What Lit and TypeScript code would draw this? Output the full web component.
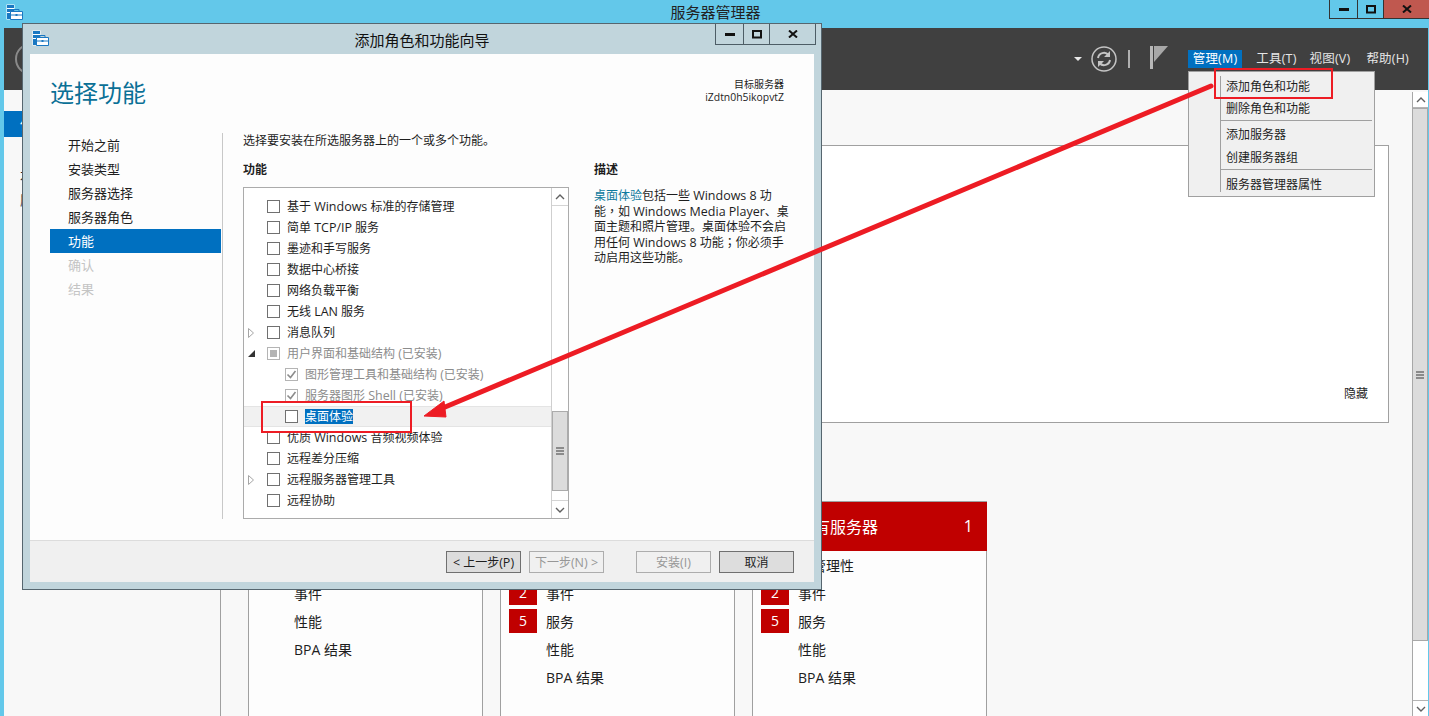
import { LitElement, html, css, svg } from 'lit';
import { customElement } from 'lit/decorators.js';

const FONT = css`"Open Sans", "Noto Sans CJK SC", sans-serif`;

// the original's latin glyphs run a little wider than its CJK ones
const latin = (text: string) =>
  text
    .split(/([\x21-\x7e]+(?: [\x21-\x7e]+)*)/)
    .map((part, i) => (i % 2 ? html`<span class="lat">${part}</span>` : part));

const appIcon = html`
  <svg class="app-icon" width="17" height="16" viewBox="0 0 17 16">
    <rect x="0.5" y="0.5" width="8" height="15" fill="#fff" />
    <rect x="1" y="1" width="7" height="3" fill="#1a78c2" />
    <rect x="1" y="5" width="7" height="3" fill="#1a78c2" />
    <rect x="1" y="9" width="3" height="6" fill="#1a78c2" />
    <path d="M4.5 7.5h12v8h-12z" fill="#fff" stroke="#1a78c2" />
    <path d="M8 7.5v-2h5v2M4.5 11h12" fill="none" stroke="#1a78c2" />
    <rect x="9.5" y="10" width="2" height="2" fill="#1a78c2" />
  </svg>
`;

const chevron = (up: boolean) => html`
  <svg width="10" height="6" viewBox="0 0 10 6">
    <path d=${up ? 'M1 5l4-4 4 4' : 'M1 1l4 4 4-4'} fill="none" stroke="#606060" stroke-width="1.4" />
  </svg>
`;

const grip = html`
  <svg width="8" height="8" viewBox="0 0 8 8">
    <path d="M0 1h8M0 4h8M0 7h8" stroke="#707070" stroke-width="1.4" />
  </svg>
`;

const windowButtons = (closeClass: string) => html`
  <div class="win-buttons">
    <div class="win-btn min"><svg width="10" height="4"><rect width="10" height="3" y="1" fill="#111" /></svg></div>
    <div class="win-btn max"><svg width="10" height="9"><rect x="1" y="1" width="8" height="6.5" fill="none" stroke="#111" stroke-width="2" /></svg></div>
    <div class="win-btn close ${closeClass}">
      <svg width="10" height="8"><path d="M1 0.5l8 7M9 0.5l-8 7" stroke="#111" stroke-width="2" /></svg>
    </div>
  </div>
`;

type Feature = {
  label: string;
  level?: number;
  arrow?: 'open' | 'closed';
  state?: 'partial' | 'checked';
  selected?: boolean;
};

const FEATURES: Feature[] = [
  { label: '基于 Windows 标准的存储管理' },
  { label: '简单 TCP/IP 服务' },
  { label: '墨迹和手写服务' },
  { label: '数据中心桥接' },
  { label: '网络负载平衡' },
  { label: '无线 LAN 服务' },
  { label: '消息队列', arrow: 'closed' },
  { label: '用户界面和基础结构 (已安装)', arrow: 'open', state: 'partial' },
  { label: '图形管理工具和基础结构 (已安装)', level: 1, state: 'checked' },
  { label: '服务器图形 Shell (已安装)', level: 1, state: 'checked' },
  { label: '桌面体验', level: 1, selected: true },
  { label: '优质 Windows 音频视频体验' },
  { label: '远程差分压缩' },
  { label: '远程服务器管理工具', arrow: 'closed' },
  { label: '远程协助' },
];

const STEPS = ['开始之前', '安装类型', '服务器选择', '服务器角色', '功能', '确认', '结果'];

@customElement('roles-wizard')
export class RolesWizard extends LitElement {
  static styles = css`
    :host {
      position: absolute;
      left: 22px;
      top: 23px;
      width: 798px;
      height: 565px;
      display: flex;
      flex-direction: column;
      border: 1px solid #56666f;
      background: #c1d5dc;
      font-family: ${FONT};
      font-size: 12px;
      color: #1e1e1e;
    }
    .lat { font-size: 12.5px; }
    .titlebar {
      height: 30px;
      flex: none;
      display: flex;
      align-items: center;
      justify-content: center;
      position: relative;
      font-size: 15px;
      color: #111;
    }
    .app-icon { position: absolute; left: 9px; top: 6px; }
    .win-buttons {
      position: absolute;
      right: 5px;
      top: 0;
      display: flex;
      height: 20px;
      border: 1px solid #4d5d66;
      border-top: 0;
    }
    .win-btn { display: flex; align-items: center; justify-content: center; }
    .win-btn + .win-btn { border-left: 1px solid #4d5d66; }
    .min { width: 27px; }
    .max { width: 25px; }
    .close { width: 45px; }
    .client {
      flex: 1;
      margin: 0 7px 7px;
      background: #fdfdfd;
      display: flex;
      flex-direction: column;
      min-height: 0;
    }
    .head {
      height: 79px;
      flex: none;
      box-sizing: border-box;
      padding: 24px 30px 0 20px;
      display: flex;
      justify-content: space-between;
    }
    h1 {
      margin: 0;
      font-size: 24px;
      line-height: 30px;
      font-weight: 400;
      color: #0a7096;
    }
    .target { text-align: right; font-size: 10px; line-height: 13px; }
    .target-id { font-size: 10.4px; }
    .body { flex: 1; display: flex; padding-left: 20px; min-height: 0; }
    nav {
      width: 172px;
      height: 386px;
      flex: none;
      border-right: 1px solid #c8c8c8;
      font-size: 13px;
    }
    .step { height: 24px; line-height: 24px; padding-left: 18px; margin-right: 1px; }
    .step.active { background: #0070c0; color: #fff; }
    .step.todo { color: #c4c4c4; }
    .pane { margin-left: 20px; flex: 1; }
    .intro { line-height: 14px; margin-top: 1px; }
    .columns { display: flex; gap: 25px; margin-top: 15px; }
    h2 { margin: 0; font-size: 12px; line-height: 14px; font-weight: 700; }
    .features { width: 326px; flex: none; }
    .list {
      margin-top: 10px;
      height: 330px;
      border: 1px solid #ababab;
      background: #fff;
      display: flex;
    }
    .rows { flex: 1; min-width: 0; padding-top: 8px; overflow: hidden; }
    .row {
      height: 21px;
      box-sizing: border-box;
      display: flex;
      align-items: center;
      padding-left: 2px;
      white-space: nowrap;
    }
    .row > span { margin-bottom: 2px; }
    .row.disabled { color: #8c8c8c; }
    .row.selected { background: #f1f1f1; border-top: 1px solid #e4e4e4; border-bottom: 1px solid #e4e4e4; }
    .expander { width: 21px; flex: none; display: flex; align-items: center; padding-left: 2px; box-sizing: border-box; }
    .indent { width: 18px; flex: none; }
    .box {
      width: 11px;
      height: 11px;
      flex: none;
      margin-right: 7px;
      background: #fff;
      border: 1px solid #707070;
      display: flex;
      align-items: center;
      justify-content: center;
    }
    .disabled .box { border-color: #b4b4b4; }
    .fill { width: 7px; height: 7px; background: #b4b4b4; }
    .row > .hl { background: #0070c0; color: #fff; line-height: 15px; margin-bottom: 0; }
    .vbar {
      width: 17px;
      flex: none;
      box-sizing: border-box;
      border-left: 1px solid #cfcfcf;
      display: flex;
      flex-direction: column;
    }
    .arrow-btn { height: 17px; flex: none; display: flex; align-items: center; justify-content: center; border-bottom: 1px solid #d4d4d4; }
    .arrow-btn.down { border-top: 1px solid #d4d4d4; border-bottom: 0; }
    .track { flex: 1; padding-top: 205px; box-sizing: border-box; display: flex; flex-direction: column; }
    .thumb {
      height: 80px;
      box-sizing: border-box;
      background: #dcdcdc;
      border: 1px solid #ababab;
      display: flex;
      align-items: center;
      justify-content: center;
    }
    .desc { width: 200px; }
    .desc p { margin: 11px 0 0; line-height: 15px; white-space: nowrap; }
    .link { color: #0e7a9e; }
    .mid-punct { font-family: "Noto Sans CJK TC", sans-serif; }
    footer {
      height: 42px;
      flex: none;
      box-sizing: border-box;
      background: #f0f0f0;
      border-top: 1px solid #dcdcdc;
      display: flex;
      padding: 10px 20px 0 416px;
      gap: 8px;
    }
    button {
      width: 75px;
      height: 22px;
      padding: 0 0 1px;
      box-sizing: border-box;
      background: #dddddd;
      border: 1px solid #707070;
      font: inherit;
      color: #1e1e1e;
    }
    button:disabled { background: #f0f0f0; border-color: #adadad; color: #979797; }
    .install { margin-left: 24px; }
  `;

  renderRow(f: Feature) {
    const disabled = f.state ? 'disabled' : '';
    return html`
      <div class="row ${disabled} ${f.selected ? 'selected' : ''}">
        <div class="expander">
          ${f.arrow === 'closed'
            ? html`<svg width="6" height="10"><path d="M0.5 0.5l5 4.5-5 4.5z" fill="#fff" stroke="#a6a6a6" /></svg>`
            : f.arrow === 'open'
              ? html`<svg width="7" height="7"><path d="M7 0v7H0z" fill="#333" /></svg>`
              : ''}
        </div>
        ${f.level ? html`<div class="indent"></div>` : ''}
        <div class="box">
          ${f.state === 'partial' ? html`<div class="fill"></div>` : ''}
          ${f.state === 'checked'
            ? html`<svg width="11" height="11"><path d="M1.5 5.5l3 3 5-6.5" fill="none" stroke="#8c8c8c" stroke-width="1.6" /></svg>`
            : ''}
        </div>
        <span class=${f.selected ? 'hl' : ''}>${latin(f.label)}</span>
      </div>
    `;
  }

  render() {
    return html`
      <div class="titlebar">
        ${appIcon}
        添加角色和功能向导
        ${windowButtons('')}
      </div>
      <div class="client">
        <div class="head">
          <h1>选择功能</h1>
          <div class="target">目标服务器<br /><span class="target-id">iZdtn0h5ikopvtZ</span></div>
        </div>
        <div class="body">
          <nav>
            ${STEPS.map(
              (s, i) => html`<div class="step ${i === 4 ? 'active' : ''} ${i > 4 ? 'todo' : ''}">${s}</div>`,
            )}
          </nav>
          <div class="pane">
            <div class="intro">选择要安装在所选服务器上的一个或多个功能。</div>
            <div class="columns">
              <div class="features">
                <h2>功能</h2>
                <div class="list">
                  <div class="rows">${FEATURES.map((f) => this.renderRow(f))}</div>
                  <div class="vbar">
                    <div class="arrow-btn">${chevron(true)}</div>
                    <div class="track"><div class="thumb">${grip}</div></div>
                    <div class="arrow-btn down">${chevron(false)}</div>
                  </div>
                </div>
              </div>
              <div class="desc">
                <h2>描述</h2>
                <p>
                  <span class="link">桌面体验</span>${latin('包括一些 Windows 8 功')}<br />
                  能<span class="mid-punct">，</span>${latin('如 Windows Media Player')}、桌<br />
                  面主题和照片管理。桌面体验不会启<br />
                  ${latin('用任何 Windows 8 功能')}<span class="mid-punct">；</span>你必须手<br />
                  动启用这些功能。
                </p>
              </div>
            </div>
          </div>
        </div>
        <footer>
          <button>${latin('< 上一步(P)')}</button>
          <button disabled>${latin('下一步(N) >')}</button>
          <button class="install" disabled>${latin('安装(I)')}</button>
          <button>取消</button>
        </footer>
      </div>
    `;
  }
}

type CardRow = { label: string; badge?: number };

const CARDS: { title: string; count: number; rows: CardRow[] }[] = [
  {
    title: '文件和存储服务',
    count: 1,
    rows: [{ label: '可管理性' }, { label: '事件' }, { label: '性能' }, { label: 'BPA 结果' }],
  },
  {
    title: '本地服务器',
    count: 1,
    rows: [
      { label: '可管理性' },
      { label: '事件', badge: 2 },
      { label: '服务', badge: 5 },
      { label: '性能' },
      { label: 'BPA 结果' },
    ],
  },
  {
    title: '所有服务器',
    count: 1,
    rows: [
      { label: '可管理性' },
      { label: '事件', badge: 2 },
      { label: '服务', badge: 5 },
      { label: '性能' },
      { label: 'BPA 结果' },
    ],
  },
];

@customElement('app-root')
export class AppRoot extends LitElement {
  static styles = css`
    :host {
      display: block;
      position: relative;
      width: 1429px;
      height: 716px;
      overflow: hidden;
      background: #63c8ea;
      font-family: ${FONT};
      font-size: 12px;
      color: #1e1e1e;
    }
    .shell { height: 716px; display: flex; flex-direction: column; padding: 0 1px 0 4px; box-sizing: border-box; }
    .titlebar {
      height: 28px;
      flex: none;
      margin: 0 -1px 0 -4px;
      position: relative;
      display: flex;
      justify-content: center;
      padding: 2px 0 0 2px;
      box-sizing: border-box;
      font-size: 15px;
      line-height: 20px;
      color: #222;
    }
    .app-icon { position: absolute; left: 6px; top: 4px; }
    .win-buttons {
      position: absolute;
      right: 0;
      top: 0;
      display: flex;
      height: 18px;
      border: 1px solid #333;
      border-top: 0;
      border-right: 0;
    }
    .win-btn { display: flex; align-items: center; justify-content: center; }
    .win-btn + .win-btn { border-left: 1px solid #333; }
    .min { width: 27px; }
    .max { width: 25px; }
    .close { width: 45px; }
    .close.hot { background: #c0584f; }
    .topbar {
      height: 62px;
      flex: none;
      background: #404040;
      display: flex;
      align-items: center;
      padding-left: 11px;
      position: relative;
    }
    .back { width: 32px; height: 32px; border: 2px solid #8a8a8a; border-radius: 50%; box-sizing: border-box; }
    .tools { margin-left: auto; display: flex; align-items: center; height: 100%; }
    .caret { margin-right: 9px; }
    .divider { width: 2px; height: 18px; background: #b0b0b0; margin: 0 20px 0 11px; }
    .flag { margin-right: 20px; margin-top: -3px; }
    .menubar { display: flex; align-items: center; margin-right: 14px; }
    .menu-item {
      height: 18px;
      line-height: 18px;
      padding: 0 5px;
      color: #e6e6e6;
      font-size: 12.5px;
      letter-spacing: 0.2px;
    }
    .menu-item + .menu-item { margin-left: 3px; }
    .menu-item:last-child { margin-left: 6px; }
    .menu-item.open { background: #0070c0; color: #fff; margin-right: 6px; }
    .content { flex: 1; display: flex; min-height: 0; background: #f8f8f8; }
    .side {
      width: 216px;
      flex: none;
      border-right: 1px solid #a0a0a0;
      padding-top: 21px;
      font-size: 14px;
    }
    .side div { height: 24px; line-height: 24px; padding-left: 16px; }
    .side .on { height: 26px; line-height: 26px; background: #0070c0; color: #fff; margin-bottom: 27px; }
    .side .muted { color: #555; }
    .main { flex: 1; min-width: 0; padding: 55px 23px 0 27px; overflow: hidden; }
    .panel {
      height: 278px;
      box-sizing: border-box;
      background: #fff;
      border: 1px solid #a0a0a0;
      display: flex;
      flex-direction: column;
      justify-content: flex-end;
      align-items: flex-end;
      padding: 0 20px 20px 0;
    }
    .cards { display: flex; gap: 17px; margin-top: 78px; }
    .card { width: 235px; flex: none; height: 300px; box-sizing: border-box; background: #fdfdfd; border: 1px solid #a0a0a0; }
    .card-head {
      height: 49px;
      box-sizing: border-box;
      margin: 0 -1px;
      background: #c00000;
      color: #fff;
      display: flex;
      align-items: center;
      justify-content: space-between;
      padding: 0 14px 2px 46px;
      font-size: 16px;
    }
    .card-rows { padding: 2px 0 0 8px; font-size: 14px; }
    .card-row { height: 24px; margin-bottom: 4px; display: flex; align-items: center; }
    .badge {
      width: 28px;
      height: 24px;
      flex: none;
      background: #c00000;
      color: #fff;
      text-align: center;
      line-height: 24px;
    }
    .slot { width: 28px; flex: none; }
    .card-row span { margin-left: 9px; }
    .vscroll { width: 16px; flex: none; box-sizing: border-box; background: #fff; border-left: 1px solid #a8a8a8; display: flex; flex-direction: column; margin-top: 2px; }
    .btn-arrow { height: 15px; flex: none; display: flex; align-items: center; justify-content: center; border-bottom: 1px solid #b4b4b4; }
    .btn-arrow.bottom { border-top: 1px solid #b4b4b4; border-bottom: 0; }
    .vthumb {
      height: 533px;
      flex: none;
      box-sizing: border-box;
      background: #dcdcdc;
      border: 1px solid #a8a8a8;
      border-left: 0;
      padding-top: 262px;
      display: flex;
      justify-content: center;
    }
    .vtrack { flex: 1; }
    .dropdown {
      position: absolute;
      left: 1188px;
      top: 71px;
      width: 187px;
      height: 126px;
      box-sizing: border-box;
      background: #f0f0f0;
      border: 1px solid #a0a0a0;
      padding: 4px 2px 4px 31px;
    }
    .dropdown::before {
      content: '';
      position: absolute;
      left: 31px;
      top: 4px;
      bottom: 4px;
      width: 1px;
      background: #a0a0a0;
    }
    .drop-item { height: 22px; line-height: 22px; padding-left: 6px; }
    .drop-item.low { margin-top: 1px; }
    .drop-sep { height: 1px; background: #a0a0a0; }
    .drop-sep.first { margin: 0 0 3px; }
    .drop-sep.second { margin: 0 0 4px; }
    .notes { position: absolute; left: 0; top: 0; pointer-events: none; }
  `;

  render() {
    return html`
      <div class="shell">
        <div class="titlebar">
          ${appIcon}
          服务器管理器
          ${windowButtons('hot')}
        </div>
        <div class="topbar">
          <div class="back"></div>
          <div class="tools">
            <svg class="caret" width="8" height="4"><path d="M0 0h8L4 4z" fill="#e8e8e8" /></svg>
            <svg width="26" height="26" viewBox="0 0 26 26">
              <circle cx="13" cy="13" r="12" fill="none" stroke="#c4c4c4" stroke-width="1.5" />
              <path d="M7 12a6 6 0 0 1 10.5-3M19 14a6 6 0 0 1-10.5 3" fill="none" stroke="#c4c4c4" stroke-width="2" />
              <path d="M19 5v6h-6zM7 21v-6h6z" fill="#c4c4c4" />
            </svg>
            <div class="divider"></div>
            <svg class="flag" width="18" height="23" viewBox="0 0 18 23">
              <rect x="0" y="0" width="3" height="23" fill="#b8b8b8" />
              <path d="M4 0h14L4 16z" fill="#a8a8a8" />
            </svg>
            <div class="menubar">
              <div class="menu-item open">管理(M)</div>
              <div class="menu-item">工具(T)</div>
              <div class="menu-item">视图(V)</div>
              <div class="menu-item">帮助(H)</div>
            </div>
          </div>
        </div>
        <div class="content">
          <div class="side">
            <div class="on">仪表板</div>
            <div>本地服务器</div>
            <div class="muted">所有服务器</div>
          </div>
          <div class="main">
            <div class="panel">隐藏</div>
            <div class="cards">
              ${CARDS.map(
                (c) => html`
                  <div class="card">
                    <div class="card-head"><span>${c.title}</span><span>${c.count}</span></div>
                    <div class="card-rows">
                      ${c.rows.map(
                        (r) => html`
                          <div class="card-row">
                            ${r.badge
                              ? html`<div class="badge">${r.badge}</div>`
                              : html`<div class="slot"></div>`}
                            <span>${r.label}</span>
                          </div>
                        `,
                      )}
                    </div>
                  </div>
                `,
              )}
            </div>
          </div>
          <div class="vscroll">
            <div class="btn-arrow">${chevron(true)}</div>
            <div class="vthumb">${grip}</div>
            <div class="vtrack"></div>
            <div class="btn-arrow bottom">${chevron(false)}</div>
          </div>
        </div>
      </div>

      <div class="dropdown">
        <div class="drop-item">添加角色和功能</div>
        <div class="drop-item">删除角色和功能</div>
        <div class="drop-sep first"></div>
        <div class="drop-item">添加服务器</div>
        <div class="drop-item low">创建服务器组</div>
        <div class="drop-sep second"></div>
        <div class="drop-item">服务器管理器属性</div>
      </div>

      <roles-wizard></roles-wizard>

      <svg class="notes" width="1429" height="716">
        ${svg`
          <rect x="1215" y="69" width="117" height="29" fill="none" stroke="#ed1c24" stroke-width="2" />
          <rect x="262" y="402" width="149" height="30" fill="none" stroke="#ed1c24" stroke-width="2" />
          <path d="M1211 86L438 410" stroke="#ed1c24" stroke-width="5" stroke-linecap="round" />
          <path d="M424 416L444 401L446 417z" fill="#ed1c24" stroke="#ed1c24" stroke-width="1" />
        `}
      </svg>
    `;
  }
}
